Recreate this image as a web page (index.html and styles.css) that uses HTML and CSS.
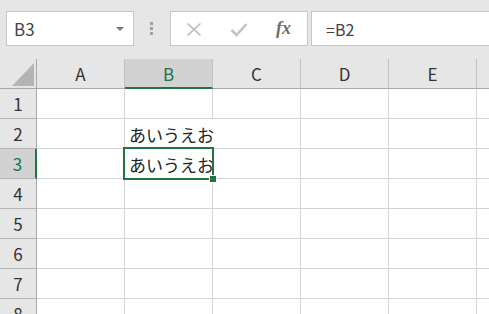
FILE: index.html
```html
<!DOCTYPE html>
<html lang="ja">
<head>
  <meta charset="UTF-8">
  <title>Sheet</title>
  <link rel="stylesheet" href="styles.css">
</head>
<body>
  <div class="toolbar">
    <div class="namebox">
      <span>B3</span>
      <i class="caret"></i>
    </div>
    <div class="grip"><i></i><i></i><i></i></div>
    <div class="fx-buttons">
      <span class="slot">
        <svg width="16" height="13" viewBox="0 0 16 13">
          <path d="M1.5 0.5 L14.5 12.5 M14.5 0.5 L1.5 12.5" stroke="#b4b4b4" stroke-width="1.4" fill="none"/>
        </svg>
      </span>
      <span class="slot">
        <svg width="18" height="14" viewBox="0 0 18 14">
          <path d="M1.5 7 L6.5 12 L16.5 1" stroke="#c4c4c4" stroke-width="2.6" fill="none"/>
        </svg>
      </span>
      <span class="slot fx">fx</span>
    </div>
    <div class="formula">=B2</div>
  </div>

  <div class="sheet">
    <div class="corner">
      <svg width="22" height="23" viewBox="0 0 22 23"><polygon points="22,0 22,23 0,23" fill="#b4b4b4"/></svg>
    </div>
    <div class="colhead">A</div>
    <div class="colhead sel">B</div>
    <div class="colhead">C</div>
    <div class="colhead">D</div>
    <div class="colhead">E</div>
    <div class="colhead"></div>

    <div class="rowhead">1</div>
    <div class="cell"></div><div class="cell"></div><div class="cell"></div><div class="cell"></div><div class="cell"></div><div class="cell"></div>

    <div class="rowhead">2</div>
    <div class="cell"></div>
    <div class="cell spill"><span class="txt">あいうえお</span></div>
    <div class="cell"></div><div class="cell"></div><div class="cell"></div><div class="cell"></div>

    <div class="rowhead sel">3</div>
    <div class="cell"></div>
    <div class="cell spill active">
      <span class="txt">あいうえお</span>
      <div class="sel-box"><i class="handle"></i></div>
    </div>
    <div class="cell"></div><div class="cell"></div><div class="cell"></div><div class="cell"></div>

    <div class="rowhead">4</div>
    <div class="cell"></div><div class="cell"></div><div class="cell"></div><div class="cell"></div><div class="cell"></div><div class="cell"></div>

    <div class="rowhead">5</div>
    <div class="cell"></div><div class="cell"></div><div class="cell"></div><div class="cell"></div><div class="cell"></div><div class="cell"></div>

    <div class="rowhead">6</div>
    <div class="cell"></div><div class="cell"></div><div class="cell"></div><div class="cell"></div><div class="cell"></div><div class="cell"></div>

    <div class="rowhead">7</div>
    <div class="cell"></div><div class="cell"></div><div class="cell"></div><div class="cell"></div><div class="cell"></div><div class="cell"></div>

    <div class="rowhead">8</div>
    <div class="cell"></div><div class="cell"></div><div class="cell"></div><div class="cell"></div><div class="cell"></div><div class="cell"></div>
  </div>
</body>
</html>
```

FILE: styles.css
```css
html, body {
  margin: 0;
  padding: 0;
  height: 314px;
  overflow: hidden;
}

body {
  background-color: #e6e6e6;
  font-family: 'Noto Sans CJK JP', 'Noto Sans', sans-serif;
  color: #444;
}

.toolbar {
  display: flex;
  height: 59px;
  padding-top: 11px;
  box-sizing: border-box;
}

.namebox {
  margin-left: 6px;
  width: 128px;
  height: 35px;
  box-sizing: border-box;
  border: 1px solid #c6c6c6;
  background: #fff;
  display: flex;
  align-items: center;
  justify-content: space-between;
  padding: 0 9px 0 7px;
  font-size: 17px;
  color: #444;
}

.caret {
  width: 0;
  height: 0;
  border-left: 4px solid transparent;
  border-right: 4px solid transparent;
  border-top: 4px solid #777;
}

.grip {
  margin-left: 16px;
  width: 4px;
  height: 35px;
  display: flex;
  flex-direction: column;
  justify-content: center;
  gap: 2px;
}

.grip i {
  display: block;
  width: 3px;
  height: 3px;
  background: #a0a0a0;
}

.fx-buttons {
  margin-left: 16px;
  width: 138px;
  height: 35px;
  box-sizing: border-box;
  border: 1px solid #c6c6c6;
  background: #fff;
  display: flex;
  align-items: center;
}

.slot {
  width: 45px;
  display: flex;
  justify-content: center;
  align-items: center;
  padding-top: 2px;
}

.fx {
  font-family: 'Liberation Serif', serif;
  font-style: italic;
  font-weight: bold;
  font-size: 18px;
  color: #6e6e6e;
  padding-top: 0;
}

.formula {
  margin-left: 3px;
  margin-right: -6px;
  flex: 1;
  height: 35px;
  box-sizing: border-box;
  border: 1px solid #c6c6c6;
  background: #fff;
  display: flex;
  align-items: center;
  padding-left: 14px;
  font-size: 16px;
  color: #444;
}

.sheet {
  display: grid;
  grid-template-columns: 37px repeat(6, 88px);
  grid-auto-rows: 30px;
}

.corner,
.colhead,
.rowhead,
.cell {
  box-sizing: border-box;
}

.corner {
  background: #e6e6e6;
  border-right: 1px solid #a8a8a8;
  border-bottom: 1px solid #a8a8a8;
  display: flex;
  justify-content: flex-end;
  align-items: flex-end;
  padding: 0 2px 2px 0;
}

.corner svg {
  display: block;
}

.colhead {
  background: #e6e6e6;
  border-right: 1px solid #c2c2c2;
  border-bottom: 1px solid #a8a8a8;
  display: flex;
  justify-content: center;
  align-items: center;
  font-size: 17px;
  color: #333;
}

.rowhead {
  background: #e6e6e6;
  border-right: 1px solid #a8a8a8;
  border-bottom: 1px solid #b4b4b4;
  display: flex;
  justify-content: center;
  align-items: center;
  font-size: 17px;
  color: #333;
}

.colhead.sel {
  background: #d2d2d2;
  color: #217346;
  border-bottom: 2px solid #217346;
}

.rowhead.sel {
  background: #d2d2d2;
  color: #217346;
  border-right: 2px solid #217346;
}

.cell {
  background: #fff;
  border-right: 1px solid #d4d4d4;
  border-bottom: 1px solid #d4d4d4;
  display: flex;
  align-items: flex-end;
  padding: 0 0 3px 4px;
  white-space: nowrap;
}

.cell.spill {
  border-right-color: #fff;
}

.txt {
  position: relative;
  z-index: 1;
  font-size: 17px;
  line-height: 20px;
  color: #222;
}

.active {
  position: relative;
}

.sel-box {
  position: absolute;
  left: -2px;
  top: -2px;
  right: -2px;
  bottom: -2px;
  border: 2px solid #217346;
  z-index: 2;
}

.handle {
  position: absolute;
  right: -5px;
  bottom: -5px;
  width: 6px;
  height: 6px;
  background: #217346;
  border: 1px solid #fff;
}
```
